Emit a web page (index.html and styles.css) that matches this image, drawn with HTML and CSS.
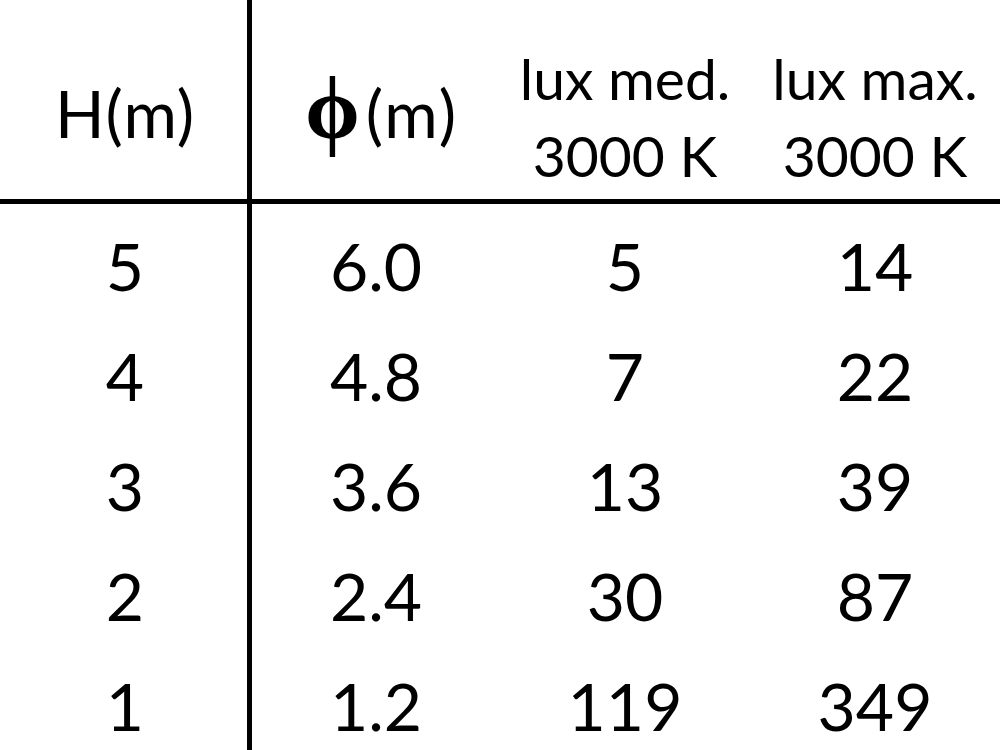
FILE: index.html
```html
<!DOCTYPE html>
<html lang="it">
<head>
<meta charset="utf-8">
<title>Tabella illuminamento</title>
<link rel="stylesheet" href="styles.css">
</head>
<body>
<div class="table">
  <div class="cell head first tall"><span>H(m)</span></div>
  <div class="cell head tall phi-cell"><span><span class="phi">ϕ</span>(m)</span></div>
  <div class="cell head"><span class="line">lux med.</span><span class="line">3000 K</span></div>
  <div class="cell head"><span class="line">lux max.</span><span class="line">3000 K</span></div>

  <div class="cell first top">5</div>
  <div class="cell top">6.0</div>
  <div class="cell top">5</div>
  <div class="cell top">14</div>

  <div class="cell first">4</div>
  <div class="cell">4.8</div>
  <div class="cell">7</div>
  <div class="cell">22</div>

  <div class="cell first">3</div>
  <div class="cell">3.6</div>
  <div class="cell">13</div>
  <div class="cell">39</div>

  <div class="cell first">2</div>
  <div class="cell">2.4</div>
  <div class="cell">30</div>
  <div class="cell">87</div>

  <div class="cell first">1</div>
  <div class="cell">1.2</div>
  <div class="cell">119</div>
  <div class="cell">349</div>
</div>
</body>
</html>
```

FILE: styles.css
```css
* {
  box-sizing: border-box;
}

html, body {
  margin: 0;
  padding: 0;
  width: 1000px;
  height: 750px;
  overflow: hidden;
  background: #ffffff;
}

body {
  font-family: Lato, "Open Sans", sans-serif;
  color: #000000;
}

.table {
  display: grid;
  grid-template-columns: 252px 248px 250px 250px;
  grid-template-rows: 204px 117px 110px 110px 110px 110px;
  width: 1000px;
}

.cell {
  display: flex;
  align-items: center;
  justify-content: center;
  font-size: 66px;
  line-height: 1.2;
  height: 110px;
}

.cell.first {
  border-right: 5px solid #000000;
  padding-left: 3px;
}

.cell.top {
  height: 117px;
  padding-top: 7px;
}

.cell.head {
  height: 204px;
  flex-direction: column;
  justify-content: flex-end;
  border-bottom: 5px solid #000000;
  font-size: 57px;
  line-height: 77px;
  padding-bottom: 5px;
}

.cell.head.tall {
  flex-direction: row;
  align-items: flex-end;
  justify-content: center;
  font-size: 65px;
  letter-spacing: 1px;
  padding-bottom: 47px;
}

.line {
  display: block;
}

.phi-cell {
  padding-left: 10px;
}

.phi {
  font-family: "Liberation Serif", serif;
  font-weight: bold;
  font-size: 88px;
  line-height: 0;
  margin-right: 5px;
}
```
